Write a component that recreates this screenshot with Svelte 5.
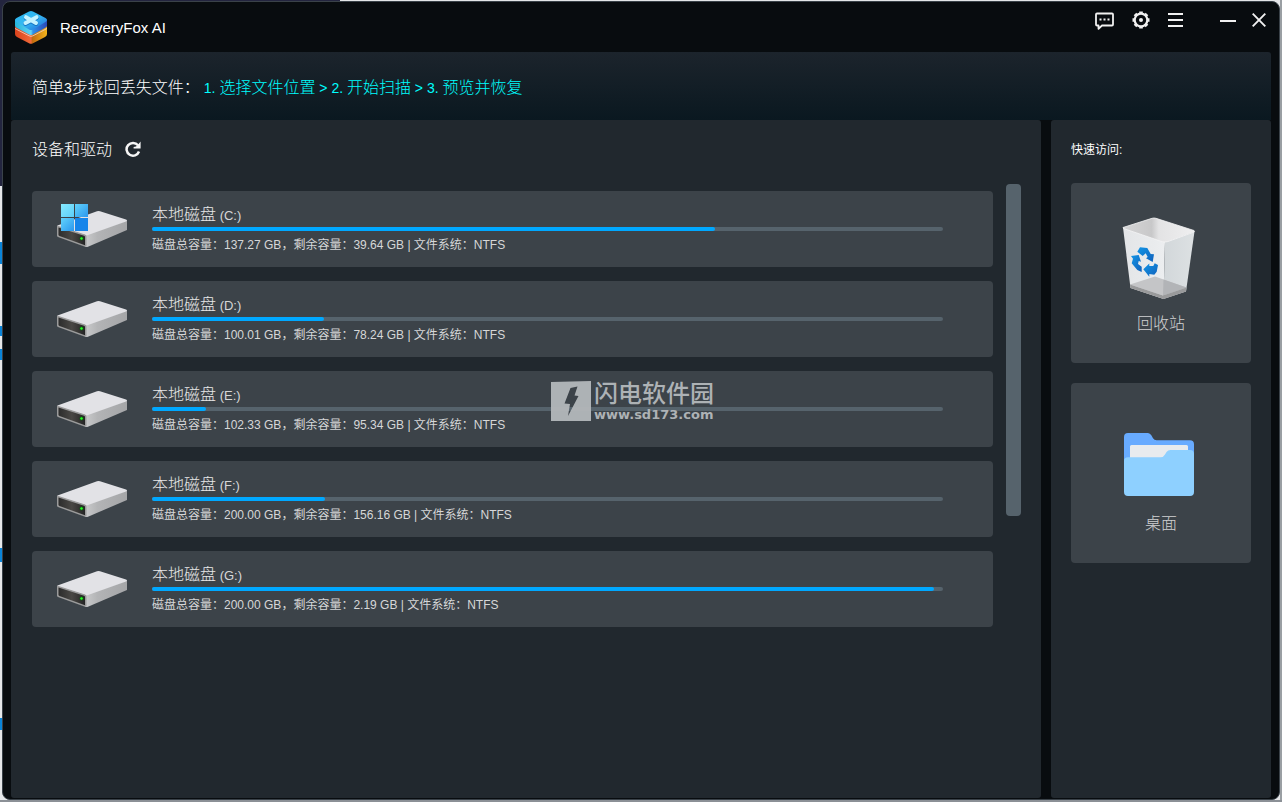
<script>
  const steps = '1. 选择文件位置 > 2. 开始扫描 > 3. 预览并恢复';

  const drives = [
    { letter: 'C', total: '137.27 GB', free: '39.64 GB', used: 71.2, system: true },
    { letter: 'D', total: '100.01 GB', free: '78.24 GB', used: 21.8 },
    { letter: 'E', total: '102.33 GB', free: '95.34 GB', used: 6.8 },
    { letter: 'F', total: '200.00 GB', free: '156.16 GB', used: 21.9 },
    { letter: 'G', total: '200.00 GB', free: '2.19 GB', used: 98.9 }
  ];

  // Splits a string so that Latin runs can be set smaller than the Chinese ones.
  function runs(text) {
    return text.split(/([\x20-\x7e]+)/).filter(Boolean).map((t) => ({ t, latin: /^[\x20-\x7e]/.test(t) }));
  }
</script>

{#snippet mixed(text)}{#each runs(text) as r}{#if r.latin}<span class="latin">{r.t}</span>{:else}{r.t}{/if}{/each}{/snippet}

<div class="window">
  <header class="titlebar">
    <svg class="logo" viewBox="0 0 32 33" aria-hidden="true">
      <defs>
        <linearGradient id="lg-top" x1="0" y1="0" x2="1" y2="1">
          <stop offset="0" stop-color="#27b4ee" /><stop offset=".5" stop-color="#35b9f2" /><stop offset="1" stop-color="#2264d8" />
        </linearGradient>
        <linearGradient id="lg-side" x1="0" x2="1">
          <stop offset="0" stop-color="#25b6dc" /><stop offset=".5" stop-color="#5fd2f2" /><stop offset=".56" stop-color="#2f8fe8" /><stop offset="1" stop-color="#2b49b8" />
        </linearGradient>
        <linearGradient id="lg-base" x1="0" x2="1">
          <stop offset="0" stop-color="#d9421c" /><stop offset=".5" stop-color="#f06a3a" /><stop offset=".54" stop-color="#c26a10" /><stop offset="1" stop-color="#f3b51c" />
        </linearGradient>
      </defs>
      <path d="M0 15 L16 22 L32 15 V23 Q32 25 30 26 L18 32.3 Q16 33.300 14 32.300 L2 26 Q0 25 0 23Z" fill="url(#lg-base)" />
      <path d="M0 17.500 L14 24.800 Q16 25.800 18 24.800 L32 17.500" fill="none" stroke="#f3d6c8" stroke-width=".8" />
      <path d="M0 8.500 L16 14 L32 8.500 V14.500 Q32 16 30 17 L18 23.600 Q16 24.600 14 23.600 L2 17 Q0 16 0 14.500Z" fill="url(#lg-side)" />
      <path d="M14 .6 Q16 -.4 18 .6 L30.500 7 Q33.500 9 30.500 11 L18 18.600 Q16 19.600 14 18.600 L1.500 11 Q-1.500 9 1.500 7Z" fill="url(#lg-top)" />
      <path d="M11 7 L21 12.800 M21.500 7 L10.500 12.800" stroke="#1776c4" stroke-width="4.400" stroke-linecap="round" />
      <path d="M11 6.200 L21 12 M21.500 6.200 L10.500 12" stroke="#c4f3ff" stroke-width="4" stroke-linecap="round" />
    </svg>
    <h1>RecoveryFox AI</h1>
    <nav class="tools" aria-label="窗口">
      <button aria-label="反馈" class="chat">
        <svg width="20" height="20" viewBox="0 0 20 20"><path d="M3 3.500H18Q19 3.500 19 4.500V14.500Q19 15.500 18 15.500H8L4.500 18.800V15.500H3Q2 15.500 2 14.500V4.500Q2 3.500 3 3.500Z" fill="none" stroke="#f1f1f1" stroke-width="1.800" stroke-linejoin="round" /><path d="M5.500 8.500h2v2h-2zM9.500 8.500h2v2h-2zM13.500 8.500h2v2h-2z" fill="#f1f1f1" /></svg>
      </button>
      <button aria-label="设置" class="gear">
        <svg width="18" height="18" viewBox="0 0 18 18"><g stroke="#f1f1f1" stroke-width="3.600"><path d="M9 .5V4M9 14V17.500M.5 9H4M14 9H17.500M3 3L5.500 5.500M12.500 12.500L15 15M3 15L5.500 12.500M12.500 5.500L15 3" /></g><circle cx="9" cy="9" r="6.300" fill="#080c0f" stroke="#f1f1f1" stroke-width="2.200" /><circle cx="9" cy="9" r="2" fill="#f1f1f1" /></svg>
      </button>
      <button aria-label="菜单" class="menu">
        <svg width="16" height="16" viewBox="0 0 16 16"><path d="M0 2H15M0 8H15M0 14H15" stroke="#f1f1f1" stroke-width="2" /></svg>
      </button>
      <button aria-label="最小化" class="min">
        <svg width="16" height="16" viewBox="0 0 16 16"><path d="M0 9H16" stroke="#f1f1f1" stroke-width="2" /></svg>
      </button>
      <button aria-label="关闭" class="close">
        <svg width="14" height="14" viewBox="0 0 14 14"><path d="M.7 .7L13.300 13.300M13.300 .7L.7 13.300" stroke="#f1f1f1" stroke-width="1.900" /></svg>
      </button>
    </nav>
  </header>

  <section class="banner">
    <p>{@render mixed('简单3步找回丢失文件：')}<span class="steps">{@render mixed(steps)}</span></p>
  </section>

  <div class="columns">
    <main class="panel devices">
      <div class="heading">
        <h2>设备和驱动</h2>
        <button aria-label="刷新">
          <svg width="16" height="18" viewBox="0 0 16 18"><path d="M13 4.300A6.400 6.400 0 1 0 14 10.500" fill="none" stroke="#f6f6f6" stroke-width="2.500" /><path d="M15.600 .5V7.500H8.600V6L11 5.500L14 2.500Z" fill="#f6f6f6" /></svg>
        </button>
      </div>

      <div class="scroll">
        <ul>
          {#each drives as d}
            <li>
              <button class="drive">
                <svg class="disk" viewBox="0 0 70 46" aria-hidden="true">
                  <defs>
                    <linearGradient id="dk-side" x1="0" x2="1"><stop offset="0" stop-color="#c9cacb" /><stop offset=".3" stop-color="#b3b4b6" /><stop offset="1" stop-color="#a5a6a8" /></linearGradient>
                    <linearGradient id="dk-front" x1="0" x2="1"><stop offset="0" stop-color="#2c2c2c" /><stop offset=".5" stop-color="#4a4845" /><stop offset="1" stop-color="#242424" /></linearGradient>
                    <linearGradient id="dk-w1" x1="0" y1="0" x2="1" y2="1"><stop offset="0" stop-color="#86eaff" /><stop offset="1" stop-color="#5ccdf9" /></linearGradient>
                    <linearGradient id="dk-w2" x1="0" y1="0" x2="1" y2="1"><stop offset="0" stop-color="#62d3fb" /><stop offset="1" stop-color="#2b97ee" /></linearGradient>
                  </defs>
                  <path d="M28 32L70 17.500V27L31 43.700Q29.500 44.300 28 43.700Z" fill="url(#dk-side)" />
                  <path d="M.5 22.500L40 8.300Q41.500 7.800 43 8.300L69 16.500Q71 17.500 69 18.500L31 32Q29.500 32.500 28 32L.5 23.500Z" fill="#e2e2e6" />
                  <path d="M0 22.500L28 31.500Q29.500 32 29.500 33.500V43.500L28 43.700L1 34Q0 33.500 0 32.500Z" fill="#9b9b9b" />
                  <path d="M1.500 24.500L27 32.800Q28 33.200 28 34V42.300L2.500 33Q1.500 32.500 1.500 31.500Z" fill="url(#dk-front)" />
                  <circle cx="24.500" cy="35.500" r="2" fill="#0c5a0c" /><circle cx="24.500" cy="35.500" r="1.200" fill="#2bff2b" />
                  {#if d.system}
                    <path d="M4 1h13v13H4z" fill="url(#dk-w1)" /><path d="M18 1h13v13H18z" fill="url(#dk-w2)" />
                    <path d="M4 15h13v13H4z" fill="url(#dk-w2)" /><path d="M18 15h13v13H18z" fill="#1685ea" />
                  {/if}
                </svg>
                <span class="facts">
                  <span class="name">{@render mixed(`本地磁盘 (${d.letter}:)`)}</span>
                  <span class="track"><span class="fill" style="width: {d.used}%"></span></span>
                  <span class="info">磁盘总容量：{d.total}，剩余容量：{d.free} | 文件系统：NTFS</span>
                </span>
              </button>
            </li>
          {/each}
        </ul>
        <div class="thumb"></div>
      </div>
    </main>

    <aside class="panel quick">
      <h3>快速访问:</h3>
      <button class="tile">
        <svg width="74" height="83" viewBox="0 0 74 83" aria-hidden="true">
          <defs>
            <linearGradient id="bn-l" x1="0" y1="0" x2="1" y2="0"><stop offset="0" stop-color="#e3e5e7" /><stop offset="1" stop-color="#eceef0" /></linearGradient>
            <linearGradient id="bn-r" x1="0" y1="0" x2="1" y2="0"><stop offset="0" stop-color="#d2d7da" /><stop offset="1" stop-color="#dde1e3" /></linearGradient>
            <linearGradient id="bn-in" x1="0" y1="0" x2="1" y2="0"><stop offset="0" stop-color="#d5d5d6" /><stop offset=".4" stop-color="#c8c8c9" /><stop offset=".5" stop-color="#e3e3e4" /><stop offset="1" stop-color="#efeff0" /></linearGradient>
            <linearGradient id="bn-a" x1="0" y1="0" x2="1" y2="1"><stop offset="0" stop-color="#1295e6" /><stop offset="1" stop-color="#1261bb" /></linearGradient>
          </defs>
          <path d="M1 10.500L43 25L41.500 82L8.500 71Z" fill="url(#bn-l)" />
          <path d="M43 25L72.500 14.500L64 74.500L41.500 82Z" fill="url(#bn-r)" />
          <path d="M8 67.500L33 59.500L64.500 70.500L41 78.500Z" fill="#c4c5c7" />
          <path d="M41.500 62.500L64.500 70.500L41 78.500Z" fill="#b2b4b7" />
          <path d="M8 67.500L41 78.500L64.500 70.500L64 74.500L41.500 82L8.500 71Z" fill="#999a9b" />
          <path d="M1 10.500L30 1.300Q32 .7 34 1.300L72 13.500Q73 14.500 72 15L46 24.500Q43 25.500 40 24.500L1.500 11.500Z" fill="url(#bn-in)" stroke="#f4f4f5" stroke-width=".8" />
          <g fill="url(#bn-a)">
            <path d="M15.300 34.700L18 30.300L25.300 31L28.700 37L32 37.300L30.700 45L24 41.300L25.700 40L23.700 36.300L20.700 39Z" />
            <path d="M9 39L16.700 38L19 44.700L16.700 44L16 47L19.700 49.700V55L15.300 53L9.700 46.300L11 41.700Z" />
            <path d="M21.300 52.300L27.300 46.500V49H31.300L32.700 46.300L36 48L34.700 54.700L32.300 57.700L27.300 57V59.700Z" />
          </g>
        </svg>
        <span>回收站</span>
      </button>
      <button class="tile">
        <svg width="70" height="83" viewBox="0 -16 70 83" aria-hidden="true">
          <path d="M4 0H24Q26 0 27.500 2.500L29 5.300Q30.300 7.300 32.500 7.300H66Q70 7.300 70 11.300V40H0V4Q0 0 4 0Z" fill="#68abff" />
          <path d="M7.500 12H62.500Q64 12 64 13.500V40H6V13.500Q6 12 7.500 12Z" fill="#e8ebee" />
          <path d="M4 24.300H36.500Q39.500 24.300 41 21.500L42.500 19Q44 17 46.500 17H66Q70 17 70 21V59Q70 63 66 63H4Q0 63 0 59V28Q0 24.300 4 24.300Z" fill="#8ed0ff" />
        </svg>
        <span>桌面</span>
      </button>
    </aside>
  </div>

  <div class="watermark">
    <svg width="40" height="40" viewBox="0 0 40 40" aria-hidden="true"><path fill-rule="evenodd" d="M0 1L40 0V40H0ZM19.500 7L26.500 5.500L23.500 14.500L27.500 15L17 35L19 23L13.500 22.500Z" fill="#b4b8bb" /></svg>
    <div><strong>闪电软件园</strong><small>www.sd173.com</small></div>
  </div>
</div>

<style>
  :global(body) {
    min-height: 100vh;
    margin: 0;
    display: flow-root;
    background:
      linear-gradient(#0a84d8, #0a84d8) 0 242px / 2px 22px no-repeat,
      linear-gradient(#0a84d8, #0a84d8) 0 326px / 2px 10px no-repeat,
      linear-gradient(#0a84d8, #0a84d8) 0 349px / 2px 11px no-repeat,
      linear-gradient(#0a84d8, #0a84d8) 0 548px / 2px 14px no-repeat,
      linear-gradient(#0a84d8, #0a84d8) 0 718px / 2px 12px no-repeat,
      linear-gradient(#23253f, #23253f) 0 0 / 340px 186px no-repeat,
      linear-gradient(#8b9096, #8b9096) 0 100% / 100% 2px no-repeat,
      linear-gradient(#9a9fa3, #9a9fa3) 100% 0 / 2px 100% no-repeat,
      #e4e6e8;
  }
  :global(*) { box-sizing: border-box; }
  .window {
    position: relative;
    display: flex;
    flex-direction: column;
    min-height: calc(100vh - 3px);
    margin: 1px 2px 2px;
    padding: 0 8px 1px;
    border: 1px solid #3a4249;
    border-radius: 8px;
    background: #080c0f;
    color: #fff;
    font-family: "Liberation Sans", "Noto Sans CJK SC", sans-serif;
  }
  h1, h2, h3, p, ul { margin: 0; padding: 0; font-weight: 400; }
  ul { list-style: none; }
  button { padding: 0; border: 0; background: none; color: inherit; font: inherit; cursor: pointer; }
  svg { display: block; }

  .titlebar { display: flex; align-items: center; height: 50px; padding: 0 5px 0 4px; }
  .logo { width: 32px; height: 33px; }
  h1 { margin-left: 13px; padding-top: 2px; font-size: 15px; line-height: 20px; }
  .tools { display: flex; align-items: center; margin: 0 0 14px auto; }
  .gear { margin-left: 18px; }
  .menu { margin-left: 18px; }
  .min { margin-left: 36px; }
  .close { margin-left: 16px; }

  .banner {
    display: flex;
    align-items: center;
    height: 68px;
    padding: 4px 21px 0;
    border-radius: 3px 3px 0 0;
    background: linear-gradient(#1c242c, #0a1820);
  }
  .banner p { font-size: 16px; line-height: 24px; font-weight: 300; }
  .latin { font-size: 14px; white-space: pre; }
  .steps { margin-left: 4px; color: #00ffff; }

  .columns { flex: 1; display: flex; gap: 10px; }
  .panel { border-radius: 3px; background: #21282e; }
  .devices { flex: 1; padding: 18px 20px 20px 21px; }
  .heading { display: flex; align-items: center; gap: 13px; height: 24px; }
  h2 { font-size: 16px; line-height: 24px; font-weight: 300; }

  .scroll { display: flex; gap: 13px; margin-top: 22px; }
  .scroll ul { flex: 1; display: grid; gap: 14px; padding-top: 7px; }
  .thumb { width: 15px; height: 332px; border-radius: 4px; background: #56636c; }

  .drive {
    display: flex;
    gap: 25px;
    width: 100%;
    height: 76px;
    padding: 12px 50px 0 25px;
    border-radius: 4px;
    background: #3c4349;
    color: #d6d7d8;
    text-align: left;
  }
  .disk { width: 70px; height: 46px; }
  .facts { flex: 1; display: flex; flex-direction: column; }
  .name { height: 24px; color: #e8e8e8; font-size: 16px; line-height: 24px; font-weight: 300; }
  .name .latin { color: #d6d7d8; font-size: 13px; }
  .track { height: 4px; border-radius: 2px; background: #56636c; }
  .fill { display: block; height: 4px; border-radius: 2px; background: #00a8ff; }
  .info { margin-top: 5px; font-size: 12px; line-height: 18px; }

  .quick { display: flex; flex-direction: column; gap: 20px; width: 220px; padding: 20px; }
  h3 { height: 23px; font-size: 12px; line-height: 20px; }
  .tile {
    display: flex;
    flex-direction: column;
    align-items: center;
    gap: 12px;
    height: 180px;
    padding-top: 34px;
    border-radius: 4px;
    background: #3c4349;
    color: #d0d1d2;
    font-size: 16px;
    line-height: 24px;
    font-weight: 300;
  }
  .tile svg { margin-right: 4px; }

  .watermark {
    position: absolute;
    left: calc(50% - 90px);
    top: calc(50% - 20px);
    display: flex;
    gap: 3px;
    color: #b4b8bb;
    opacity: 0.95;
    pointer-events: none;
  }
  .watermark div { display: flex; flex-direction: column; }
  .watermark strong { font-size: 24px; line-height: 26px; font-weight: 500; }
  .watermark small { font: bold 13px/16px "DejaVu Sans", sans-serif; }
</style>
